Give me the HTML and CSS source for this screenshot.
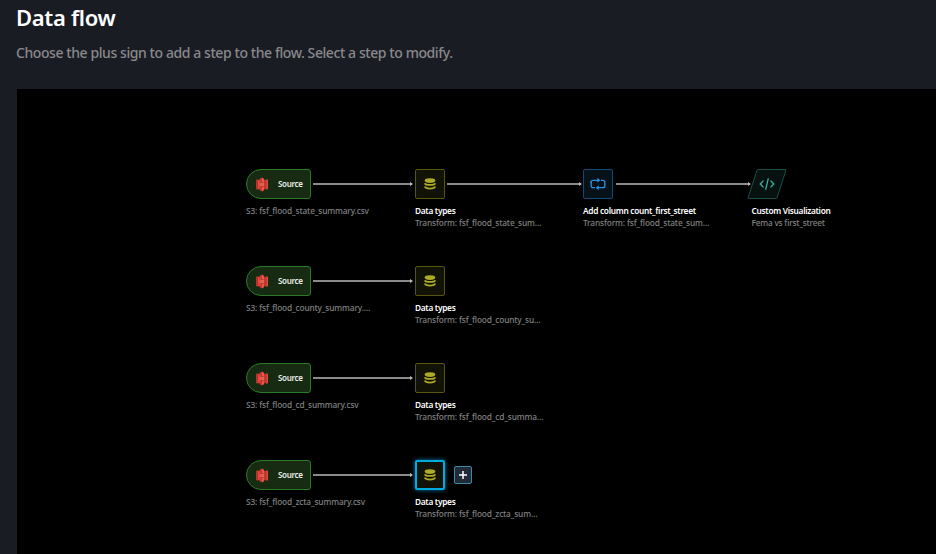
FILE: index.html
```html
<!DOCTYPE html>
<html lang="en">
<head>
<meta charset="utf-8">
<title>Data flow</title>
<link rel="stylesheet" href="styles.css">
</head>
<body>
<svg width="0" height="0" class="defs" aria-hidden="true">
  <symbol id="s3" viewBox="0 0 12 15">
    <path fill="#b8352c" d="M0 3 1.8 2.1v10.8L0 12z"/>
    <path fill="#e5483c" d="M1.8 2.8 5.4 3.5v8L1.8 12.2z"/>
    <path fill="#b8352c" d="M6.6 3.5 10.2 2.8v9.4l-3.6-.7z"/>
    <path fill="#e5483c" d="M10.2 2.1 12 3v9l-1.8.9z"/>
    <path fill="#c53c32" d="M3.4 2 6 .6V5l-2.6.7zM3.4 9.3 6 10v4.400L3.400 13z"/>
    <path fill="#ee5548" d="M6 .6 8.200 2v3.700L6 5zM6 10l2.200-.7V13L6 14.400zM4 6l2-.4V9.400L4 9z"/>
    <path fill="#d9685e" d="M6 5.600 8.200 6v3L6 9.400z"/>
  </symbol>
  <symbol id="data" viewBox="0 0 12 12">
    <ellipse cx="6" cy="2.600" rx="5.300" ry="2.400" fill="#adab27"/>
    <path fill="none" stroke="#adab27" stroke-width="1.800" d="M.8 5.200c.8 2.300 9.600 2.300 10.400 0M.8 8.600c.8 2.700 9.600 2.700 10.400 0"/>
  </symbol>
  <symbol id="loop" viewBox="0 0 16 12">
    <path fill="none" stroke="#2795e0" stroke-width="1.300" d="M5 9.700H3.200Q1.200 9.700 1.200 7.700V4.300H.8Q1 2.300 3 2.300h6M11 2.300h1.800q2 0 2 2v3.400q0 2-2 2H7"/>
    <path fill="#2795e0" d="M7.400-.2 10.200 2.300 7.400 4.800zM8.600 7.200 5.800 9.700l2.800 2.500z"/>
  </symbol>
  <symbol id="code" viewBox="0 0 16 12">
    <path fill="none" stroke="#3fb5a3" stroke-width="1.300" d="M4.500 2.600 1.200 6l3.300 3.400M11.500 2.600 14.800 6l-3.300 3.400M9.300.3 6.700 11.700"/>
  </symbol>
</svg>
<header class="page-head">
  <h1>Data flow</h1>
  <p>Choose the plus sign to add a step to the flow. Select a step to modify.</p>
</header>
<main class="canvas">
  <section class="flow flow-1">
    <div class="node source-node"><div class="source"><svg class="s3"><use href="#s3"/></svg><span>Source</span></div><p class="sub name">S3: fsf_flood_state_summary.csv</p></div>
    <i class="edge edge-1"></i>
    <div class="node data-node"><div class="box"><svg class="data"><use href="#data"/></svg></div><p class="label">Data types</p><p class="sub">Transform: fsf_flood_state_sum…</p></div>
    <i class="edge edge-2"></i>
    <div class="node column-node"><div class="box blue"><svg class="loop"><use href="#loop"/></svg></div><p class="label">Add column count_first_street</p><p class="sub">Transform: fsf_flood_state_sum…</p></div>
    <i class="edge edge-3"></i>
    <div class="node visual-node"><div class="visual"><svg class="code"><use href="#code"/></svg></div><p class="label">Custom Visualization</p><p class="sub short">Fema vs first_street</p></div>
  </section>
  <section class="flow flow-2">
    <div class="node source-node"><div class="source"><svg class="s3"><use href="#s3"/></svg><span>Source</span></div><p class="sub name">S3: fsf_flood_county_summary.…</p></div>
    <i class="edge edge-1"></i>
    <div class="node data-node"><div class="box"><svg class="data"><use href="#data"/></svg></div><p class="label">Data types</p><p class="sub">Transform: fsf_flood_county_su…</p></div>
  </section>
  <section class="flow flow-3">
    <div class="node source-node"><div class="source"><svg class="s3"><use href="#s3"/></svg><span>Source</span></div><p class="sub name">S3: fsf_flood_cd_summary.csv</p></div>
    <i class="edge edge-1"></i>
    <div class="node data-node"><div class="box"><svg class="data"><use href="#data"/></svg></div><p class="label">Data types</p><p class="sub">Transform: fsf_flood_cd_summa…</p></div>
  </section>
  <section class="flow flow-4">
    <div class="node source-node"><div class="source"><svg class="s3"><use href="#s3"/></svg><span>Source</span></div><p class="sub name">S3: fsf_flood_zcta_summary.csv</p></div>
    <i class="edge edge-1"></i>
    <div class="node data-node"><div class="box selected"><svg class="data"><use href="#data"/></svg></div><p class="label">Data types</p><p class="sub">Transform: fsf_flood_zcta_sum…</p></div>
    <button class="add" aria-label="Add step"><svg viewBox="0 0 16 16"><path d="M8 4v8M4 8h8"/></svg></button>
  </section>
</main>
</body>
</html>
```
FILE: styles.css
```css
* { box-sizing: border-box; }
body { margin: 0; height: 554px; overflow: hidden; display: flex; flex-direction: column; background: #1a1c24; color: #fff; font-family: "Noto Sans", "Open Sans", sans-serif; }
h1, p { margin: 0; white-space: nowrap; }
.defs { position: absolute; }
.page-head { height: 89px; flex: none; padding: 2px 0 0 16px; }
h1 { font-size: 22px; line-height: 30px; font-weight: 600; letter-spacing: -.3px; }
.page-head p { margin-top: 11px; font-size: 14px; line-height: 20px; font-weight: 500; color: #89898b; letter-spacing: -.42px; }
.canvas { position: relative; flex: 1; margin-left: 17px; background: #000; overflow: hidden; }
.flow { position: absolute; left: 0; width: 919px; height: 62px; }
.flow-1 { top: 80px; }
.flow-2 { top: 177px; }
.flow-3 { top: 274px; }
.flow-4 { top: 371px; }
.node { position: absolute; top: 0; }
.source-node { left: 229px; }
.data-node { left: 398px; }
.column-node { left: 566px; }
.visual-node { left: 734.500px; }
.source { width: 65px; height: 30px; display: flex; align-items: center; padding-left: 8.500px; border: 1px solid #2b7a27; border-radius: 15px 3px 3px 15px; background: #172b13; }
.source span { margin-left: 10.500px; font-size: 8px; line-height: 12px; font-weight: 600; color: #e8ece7; letter-spacing: -.3px; }
.s3 { width: 12px; height: 15px; flex: none; }
.box { width: 30px; height: 30px; display: flex; align-items: center; justify-content: center; border: 1px solid #56560f; border-radius: 2px; background: #121207; }
.box.blue { border-color: #124b75; background: #07111a; }
.box.selected { border: 2px solid #00a9e0; box-shadow: 0 0 4px #007ba8; }
.data { width: 12px; height: 12px; }
.loop, .code { width: 16px; height: 12px; overflow: visible; }
.visual { position: relative; left: -4px; width: 38px; height: 30px; display: flex; align-items: center; justify-content: center; }
.visual::before { content: ""; position: absolute; inset: 0 4px; transform: skewX(-18deg); border: 1px solid #1d4f49; border-radius: 2px; background: #07110f; }
.code { position: relative; }
.label { margin-top: 6px; font-size: 8.300px; line-height: 12px; font-weight: 600; letter-spacing: -.29px; }
.sub { font-size: 8.300px; line-height: 12px; font-weight: 500; color: #808080; letter-spacing: -.13px; }
.short { letter-spacing: -.2px; }
.name { margin-top: 6px; }
.edge { position: absolute; top: 14px; height: 1.500px; background: #8b8b8b; }
.edge::after { content: ""; position: absolute; right: -1px; top: -1.500px; border: 2px solid transparent; border-left: 3px solid #bbb; border-right: 0; }
.edge-1 { left: 296px; width: 99px; }
.edge-2 { left: 430px; width: 134px; }
.edge-3 { left: 599px; width: 134px; }
.add { position: absolute; left: 437px; top: 6px; width: 18px; height: 18px; padding: 0; border: 1px solid #3f89a7; border-radius: 2px; background: #212b38; }
.add svg { display: block; width: 16px; height: 16px; }
.add path { fill: none; stroke: #fff; stroke-width: 1.500; }
```
